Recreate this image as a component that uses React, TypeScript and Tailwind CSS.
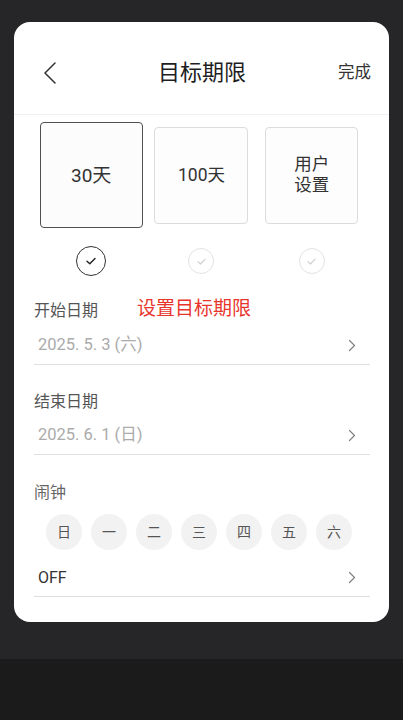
import React from "react";

const FONT = { fontFamily: 'Roboto, "Noto Sans CJK SC", "Noto Sans", sans-serif' };

function ChevronRight({ color = "#808080" }: { color?: string }) {
  return (
    <svg width="8" height="13" viewBox="0 0 8 13" fill="none">
      <path d="M1.5 1.5 L6.5 6.5 L1.5 11.5" stroke={color} strokeWidth="1.2" strokeLinecap="round" strokeLinejoin="round" />
    </svg>
  );
}

function Check({ selected }: { selected: boolean }) {
  if (selected) {
    return (
      <div className="w-[30px] h-[30px] rounded-full border-[1.5px] border-[#333] flex items-center justify-center">
        <svg width="12" height="10" viewBox="0 0 12 10" fill="none">
          <path d="M2 5.2 L4.8 7.8 L10 2.4" stroke="#222" strokeWidth="1.4" strokeLinecap="round" strokeLinejoin="round" />
        </svg>
      </div>
    );
  }
  return (
    <div className="w-[26px] h-[26px] rounded-full border-[1.5px] border-[#e2e2e2] flex items-center justify-center">
      <svg width="11" height="9" viewBox="0 0 12 10" fill="none">
        <path d="M2 5.2 L4.8 7.8 L10 2.4" stroke="#cfcfcf" strokeWidth="1.3" strokeLinecap="round" strokeLinejoin="round" />
      </svg>
    </div>
  );
}

export default function App() {
  const days = ["日", "一", "二", "三", "四", "五", "六"];
  return (
    <div className="w-full h-[720px] bg-[#262628] flex flex-col" style={FONT}>
      <div className="pt-[22px] px-[14px]">
        <div className="h-[600px] bg-white rounded-[16px] flex flex-col">
          {/* header */}
          <div className="h-[93px] pt-[10px] grid grid-cols-[1fr_auto_1fr] items-center pl-[29px] pr-[18px] border-b border-[#f0f0f0]">
            <div className="flex">
              <svg width="14" height="22" viewBox="0 0 14 22" fill="none">
                <path d="M12 1 L2 11 L12 21" stroke="#333" strokeWidth="1.5" strokeLinecap="round" strokeLinejoin="round" />
              </svg>
            </div>
            <div className="text-[22px] leading-none text-[#1e1e1e] pr-[10px]">目标期限</div>
            <div className="flex justify-end text-[16.5px] leading-none text-[#333]">完成</div>
          </div>

          {/* boxes */}
          <div className="grid grid-cols-3 px-[22px] pt-[7px] h-[113px] items-center">
            <div className="flex justify-center">
              <div className="w-[103px] h-[106px] rounded-[4px] border-[1.5px] border-[#505050] bg-[#fcfcfc] flex items-center justify-center text-[19px] text-[#333] pt-[2px]">
                30天
              </div>
            </div>
            <div className="flex justify-center">
              <div className="w-[94px] h-[97px] rounded-[4px] border border-[#dcdcdc] bg-[#fdfdfd] flex items-center justify-center text-[17.5px] text-[#333]">
                100天
              </div>
            </div>
            <div className="flex justify-center">
              <div className="w-[93px] h-[97px] rounded-[4px] border border-[#dcdcdc] bg-[#fdfdfd] flex flex-col items-center justify-center text-[17.5px] leading-[21px] text-[#333]">
                <span>用户</span>
                <span>设置</span>
              </div>
            </div>
          </div>

          {/* checks */}
          <div className="grid grid-cols-3 px-[22px] mt-[18px] h-[30px] items-center">
            <div className="flex justify-center"><Check selected /></div>
            <div className="flex justify-center"><Check selected={false} /></div>
            <div className="flex justify-center"><Check selected={false} /></div>
          </div>

          {/* form */}
          <div className="pl-[20px] pr-[19px] flex flex-col">
            <div className="mt-[24px] h-[22px] flex items-center">
              <span className="text-[16px] text-[#555]">开始日期</span>
              <span className="ml-[39px] text-[19px] text-[#e8352c] -mt-[4px]">设置目标期限</span>
            </div>
            <div className="mt-[5px] h-[37.5px] flex items-center justify-between pl-[4px] pr-[14px] border-b-[1.5px] border-[#e0e0e0]">
              <span className="text-[16.5px] text-[#ababab]">2025. 5. 3 (六)</span>
              <ChevronRight />
            </div>

            <div className="mt-[26px] h-[22px] flex items-center">
              <span className="text-[16px] text-[#555]">结束日期</span>
            </div>
            <div className="mt-[4.5px] h-[37.5px] flex items-center justify-between pl-[4px] pr-[14px] border-b-[1.5px] border-[#e0e0e0]">
              <span className="text-[16.5px] text-[#ababab]">2025. 6. 1 (日)</span>
              <ChevronRight />
            </div>

            <div className="mt-[27px] h-[22px] flex items-center">
              <span className="text-[16px] text-[#666]">闹钟</span>
            </div>
            <div className="mt-[10.5px] flex pl-[12px] gap-[9px]">
              {days.map((d) => (
                <div key={d} className="w-[36px] h-[36px] rounded-full bg-[#f2f2f2] flex items-center justify-center text-[14px] text-[#555]">
                  {d}
                </div>
              ))}
            </div>
            <div className="mt-[9px] h-[37.5px] flex items-center justify-between pl-[4px] pr-[14px] border-b-[1.5px] border-[#dedede]">
              <span className="text-[16px] text-[#333] mt-[2px]">OFF</span>
              <ChevronRight />
            </div>
          </div>
        </div>
      </div>
      <div className="mt-[37px] flex-1 bg-[#1b1b1b]" />
    </div>
  );
}
